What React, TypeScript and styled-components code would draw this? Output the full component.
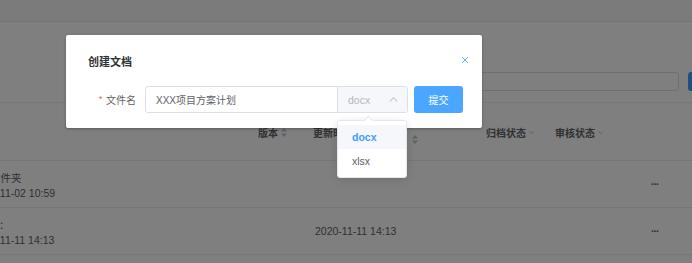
import React from 'react';
import styled, { createGlobalStyle } from 'styled-components';

const GlobalStyle = createGlobalStyle`
    html, body {
        margin: 0;
        padding: 0;
        background: #fff;
        overflow: hidden;
    }
    body {
        font-family: 'Liberation Sans', 'Noto Sans CJK SC', sans-serif;
        color: #606266;
    }
`;

const SortIcon: React.FC = () => (
    <svg width="6" height="9" viewBox="0 0 6 9">
        <path d="M3 0 L6 3.5 L0 3.5 Z" fill="#c0c4cc" />
        <path d="M3 9 L6 5.5 L0 5.5 Z" fill="#c0c4cc" />
    </svg>
);

const Chevron: React.FC<{ up?: boolean; size?: number; color?: string }> = ({
    up,
    size = 6,
    color = '#909399',
}) => (
    <svg width={size} height={size} viewBox="0 0 10 10">
        <path
            d={up ? 'M1 7 L5 3 L9 7' : 'M1 3 L5 7 L9 3'}
            fill="none"
            stroke={color}
            strokeWidth="1.2"
        />
    </svg>
);

const App: React.FC = () => {
    return (
        <Page>
            <GlobalStyle />
            <TopBar />
            <SearchRow>
                <SearchInput />
                <SearchButton />
            </SearchRow>
            <Table>
                <HeaderCell />
                <HeaderCell>
                    版本 <SortIcon />
                </HeaderCell>
                <HeaderCell>
                    更新时间
                    <SortDrop>
                        <SortIcon />
                    </SortDrop>
                </HeaderCell>
                <HeaderCell>
                    归档状态 <Chevron size={5} />
                </HeaderCell>
                <HeaderCell>
                    审核状态 <Chevron size={5} />
                </HeaderCell>
                <HeaderCell />

                <Cell>
                    <NameBlock>
                        <NameLine $shift={-4}>新建文件夹</NameLine>
                        <div>2020-11-02 10:59</div>
                    </NameBlock>
                </Cell>
                <Cell />
                <Cell />
                <Cell />
                <Cell />
                <Cell>
                    <More>···</More>
                </Cell>

                <Cell>
                    <NameBlock>
                        <NameLine $shift={-16}>项目方案：</NameLine>
                        <div>2020-11-11 14:13</div>
                    </NameBlock>
                </Cell>
                <Cell />
                <Cell>2020-11-11 14:13</Cell>
                <Cell />
                <Cell />
                <Cell>
                    <More>···</More>
                </Cell>
            </Table>

            <Overlay>
                <Dialog>
                    <DialogHeader>
                        <Title>创建文档</Title>
                        <CloseButton aria-label="close">
                            <svg width="8" height="8" viewBox="0 0 8 8">
                                <path
                                    d="M1 1 L7 7 M7 1 L1 7"
                                    stroke="#66b1ff"
                                    strokeWidth="1"
                                />
                            </svg>
                        </CloseButton>
                    </DialogHeader>
                    <FormRow>
                        <Label>
                            <Required>*</Required>文件名
                        </Label>
                        <InputGroup>
                            <TextInput defaultValue="XXX项目方案计划" />
                            <SelectAppend>
                                <span>docx</span>
                                <Chevron up size={9} color="#c0c4cc" />
                                <Dropdown>
                                    <Option $active>docx</Option>
                                    <Option>xlsx</Option>
                                </Dropdown>
                            </SelectAppend>
                        </InputGroup>
                        <SubmitButton>提交</SubmitButton>
                    </FormRow>
                </Dialog>
            </Overlay>
        </Page>
    );
};

const Page = styled.div`
    position: relative;
    width: 692px;
    height: 263px;
    overflow: hidden;
    background: #fff;
`;

const TopBar = styled.div`
    height: 21px;
    background: #f6f6f6;
    border-bottom: 1px solid #e8e8e8;
`;

const SearchRow = styled.div`
    display: flex;
    justify-content: flex-end;
    gap: 9px;
    margin-top: 50px;
    margin-right: -20px;
`;

const SearchInput = styled.div`
    width: 275px;
    height: 17px;
    border: 1px solid #dcdfe6;
    border-radius: 3px;
`;

const SearchButton = styled.div`
    width: 24px;
    height: 19px;
    background: #409eff;
    border-radius: 3px;
`;

const Table = styled.div`
    margin-top: 11px;
    border-top: 1px solid #ebeef5;
    display: grid;
    grid-template-columns: 258px 55px 173px 69px 85px 52px;
    grid-template-rows: 58px 47px 47px;
    font-size: 10.5px;
`;

const HeaderCell = styled.div`
    display: flex;
    align-items: center;
    gap: 3px;
    padding-top: 2px;
    font-size: 10px;
    font-weight: bold;
    color: #606266;
    border-bottom: 1px solid #ebeef5;
    white-space: nowrap;
`;

const SortDrop = styled.span`
    margin-left: 56px;
    margin-top: 14px;
    display: inline-flex;
`;

const Cell = styled.div`
    display: flex;
    align-items: center;
    padding-left: 2px;
    color: #606266;
    border-bottom: 1px solid #ebeef5;
    white-space: nowrap;
`;

const NameBlock = styled.div`
    margin-left: -29px;
    margin-top: 2px;
    display: flex;
    flex-direction: column;
    gap: 3px;
    line-height: 12px;
`;

const NameLine = styled.div<{ $shift: number }>`
    margin-left: ${(p) => p.$shift}px;
`;

const More = styled.span`
    margin-left: 9px;
    font-weight: bold;
    letter-spacing: -1px;
`;

const Overlay = styled.div`
    position: absolute;
    inset: 0;
    background: rgba(0, 0, 0, 0.5);
    padding: 35px 0 0 66px;
`;

const Dialog = styled.div`
    width: 416px;
    box-sizing: border-box;
    background: #fff;
    border-radius: 2px;
    box-shadow: 0 1px 3px rgba(0, 0, 0, 0.3);
    padding: 18px 13px 15px 22px;
`;

const DialogHeader = styled.div`
    display: flex;
    justify-content: space-between;
    align-items: center;
    height: 16px;
`;

const Title = styled.span`
    font-family: 'Noto Sans CJK SC', sans-serif;
    font-size: 11px;
    font-weight: bold;
    color: #303133;
`;

const CloseButton = styled.button`
    background: transparent;
    border: none;
    padding: 0;
    display: flex;
    margin-top: -3px;
`;

const FormRow = styled.div`
    display: flex;
    align-items: center;
    margin-top: 17px;
`;

const Label = styled.label`
    width: 48px;
    padding-right: 9px;
    text-align: right;
    font-family: 'Noto Sans CJK SC', sans-serif;
    font-size: 10px;
    color: #606266;
`;

const Required = styled.span`
    color: #f56c6c;
    margin-right: 3px;
`;

const InputGroup = styled.div`
    display: flex;
    width: 263px;
    height: 27px;
    box-sizing: border-box;
    border: 1px solid #dcdfe6;
    border-radius: 3px;
`;

const TextInput = styled.input`
    flex: 1;
    min-width: 0;
    border: none;
    outline: none;
    padding: 0 0 0 10px;
    font-family: 'Liberation Sans', 'Noto Sans CJK SC', sans-serif;
    font-size: 10px;
    color: #606266;
    background: transparent;
`;

const SelectAppend = styled.div`
    position: relative;
    width: 70px;
    box-sizing: border-box;
    display: flex;
    align-items: center;
    justify-content: space-between;
    padding: 0 9px 0 10px;
    background: #f5f7fa;
    border-left: 1px solid #dcdfe6;
    border-radius: 0 3px 3px 0;
    font-size: 10.5px;
    color: #b4b7bd;
`;

const Dropdown = styled.ul`
    position: absolute;
    top: 33px;
    left: -1px;
    width: 70px;
    box-sizing: border-box;
    margin: 0;
    padding: 4px 0;
    list-style: none;
    background: #fff;
    border: 1px solid #e4e7ed;
    border-radius: 3px;
    box-shadow: 0 2px 10px rgba(0, 0, 0, 0.12);

    &::before {
        content: '';
        position: absolute;
        top: -4px;
        left: 27px;
        width: 6px;
        height: 6px;
        background: #fff;
        border-top: 1px solid #e4e7ed;
        border-left: 1px solid #e4e7ed;
        transform: rotate(45deg);
    }
`;

const Option = styled.li<{ $active?: boolean }>`
    height: 24px;
    line-height: 24px;
    padding-left: 14px;
    font-size: 10.5px;
    color: ${(p) => (p.$active ? '#409eff' : '#606266')};
    font-weight: ${(p) => (p.$active ? 'bold' : 'normal')};
    background: ${(p) => (p.$active ? '#f5f7fa' : '#fff')};
`;

const SubmitButton = styled.button`
    margin-left: 6px;
    width: 49px;
    height: 27px;
    border: none;
    border-radius: 3px;
    background: #4ba6ff;
    color: #fff;
    font-family: 'Noto Sans CJK SC', sans-serif;
    font-size: 10px;
    cursor: pointer;
`;

export default App;
